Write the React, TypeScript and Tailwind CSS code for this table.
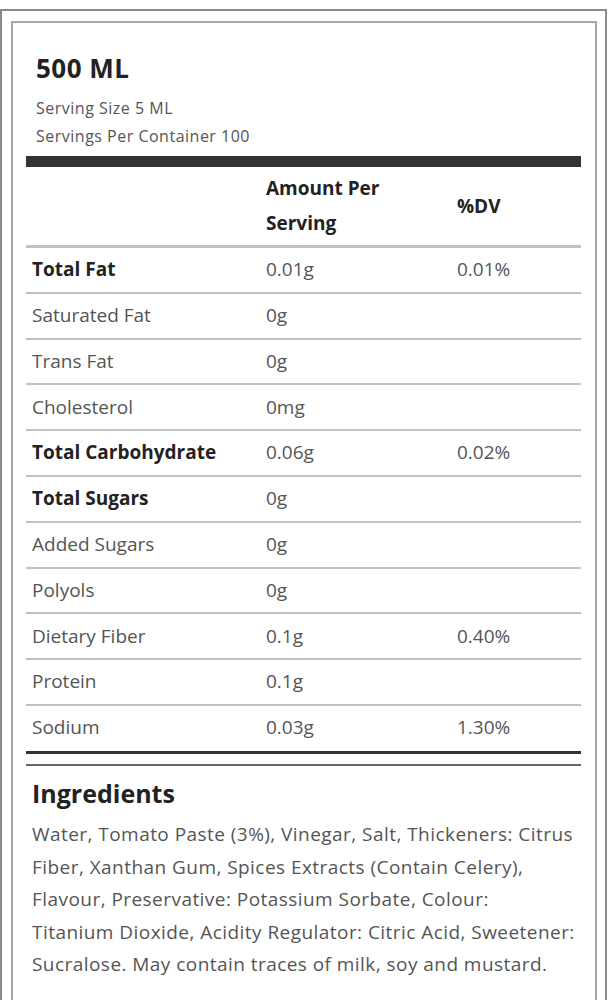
const ROWS = [
  { name: 'Total Fat', amount: '0.01g', dv: '0.01%', bold: true },
  { name: 'Saturated Fat', amount: '0g', dv: '' },
  { name: 'Trans Fat', amount: '0g', dv: '' },
  { name: 'Cholesterol', amount: '0mg', dv: '' },
  { name: 'Total Carbohydrate', amount: '0.06g', dv: '0.02%', bold: true },
  { name: 'Total Sugars', amount: '0g', dv: '', bold: true },
  { name: 'Added Sugars', amount: '0g', dv: '' },
  { name: 'Polyols', amount: '0g', dv: '' },
  { name: 'Dietary Fiber', amount: '0.1g', dv: '0.40%' },
  { name: 'Protein', amount: '0.1g', dv: '' },
  { name: 'Sodium', amount: '0.03g', dv: '1.30%' },
];

const INGREDIENT_LINES = [
  'Water, Tomato Paste (3%), Vinegar, Salt, Thickeners: Citrus',
  'Fiber, Xanthan Gum, Spices Extracts (Contain Celery),',
  'Flavour, Preservative: Potassium Sorbate, Colour:',
  'Titanium Dioxide, Acidity Regulator: Citric Acid, Sweetener:',
  'Sucralose. May contain traces of milk, soy and mustard.',
];

export default function App() {
  return (
    <div className="w-[611px] h-[1000px] overflow-hidden bg-white pt-[9px] font-['Open_Sans',sans-serif]">
      <div className="w-[607px] h-[1010px] border-2 border-b-0 border-[#8a8a8a] pt-[10px] pl-[9px] pr-[8px]">
        <div className="h-[1000px] border-2 border-b-0 border-[#a8a8a8] pt-[30px] pl-[13px] pr-[14px]">
          <h1 className="pl-[10px] text-[26px] leading-[30px] tracking-[0.5px] font-bold text-[#222]">500 ML</h1>
          <div className="mt-[11px] pl-[10px] text-[16px] leading-[28px] tracking-[0.5px] text-[#555]">
            <p>Serving Size 5 ML</p>
            <p>Servings Per Container 100</p>
          </div>
          <div className="mt-[6px] h-[11px] bg-[#333]" />

          <div className="grid grid-cols-[240px_191px_1fr] items-center h-[81px] border-b-[3px] border-[#c2c2c2] text-[19px] font-bold text-[#222]">
            <div />
            <div className="leading-[35px] pb-[1px]">
              Amount Per
              <br />
              Serving
            </div>
            <div>%DV</div>
          </div>

          {ROWS.map((row, i) => (
            <div
              key={row.name}
              className={
                i === ROWS.length - 1
                  ? 'grid grid-cols-[240px_191px_1fr] items-center h-[48px] border-b-[3px] border-[#333] text-[19px] text-[#555] pb-[2px]'
                  : 'grid grid-cols-[240px_191px_1fr] items-center h-[45.8px] border-b-2 border-[#c2c2c2] text-[19px] text-[#555] pb-[1px]'
              }
            >
              <div className={row.bold ? 'pl-[6px] font-bold text-[#222]' : 'pl-[6px]'}>{row.name}</div>
              <div>{row.amount}</div>
              <div>{row.dv}</div>
            </div>
          ))}

          <div className="mt-[10px] border-t-2 border-[#666]" />

          <h2 className="mt-[11px] pl-[6px] text-[25px] leading-[32px] font-bold text-[#222]">Ingredients</h2>
          <div className="mt-[9px] pl-[6px] text-[19px] leading-[32.6px] tracking-[0.45px] text-[#555]">
            {INGREDIENT_LINES.map((line) => (
              <span key={line} className="block whitespace-nowrap">
                {line}
              </span>
            ))}
          </div>
        </div>
      </div>
    </div>
  );
}
